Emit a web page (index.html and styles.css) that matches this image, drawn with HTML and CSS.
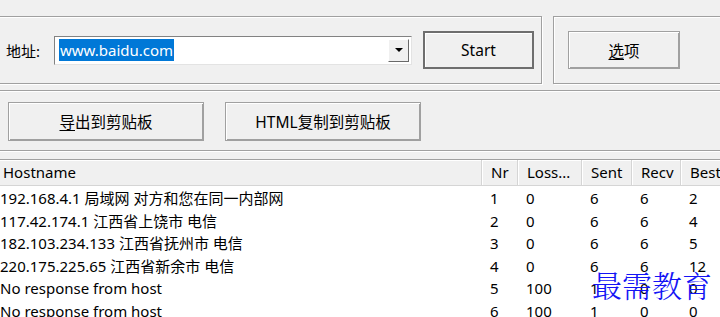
FILE: index.html
```html
<!DOCTYPE html>
<html lang="zh-CN">
<head>
    <meta charset="UTF-8">
    <title>Trace Route</title>
    <link rel="stylesheet" href="styles.css">
</head>
<body>
    <div class="window">
        <div class="top">
            <div class="group group-address">
                <span class="label">地址:</span>
                <div class="combo">
                    <div class="combo-text"><span class="selected">www.baidu.com</span></div>
                    <div class="combo-arrow"><span class="triangle"></span></div>
                </div>
                <button class="btn btn-default">Start</button>
            </div>
            <div class="group group-options">
                <button class="btn btn-options"><u>选</u>项</button>
            </div>
        </div>

        <div class="actions">
            <button class="btn btn-wide"><u>导</u>出到剪贴板</button>
            <button class="btn btn-wide">HTML复制到剪贴板</button>
        </div>

        <div class="list">
            <div class="list-header">
                <div class="col col-host">Hostname</div>
                <div class="col">Nr</div>
                <div class="col">Loss...</div>
                <div class="col">Sent</div>
                <div class="col">Recv</div>
                <div class="col">Best</div>
            </div>
            <div class="list-body" id="rows"></div>
        </div>

        <div class="watermark">最需教育</div>
    </div>

    <script>
        // Trace results
        const hops = [
            ['192.168.4.1 局域网 对方和您在同一内部网', 1, 0, 6, 6, 2],
            ['117.42.174.1 江西省上饶市 电信', 2, 0, 6, 6, 4],
            ['182.103.234.133 江西省抚州市 电信', 3, 0, 6, 6, 5],
            ['220.175.225.65 江西省新余市 电信', 4, 0, 6, 6, 12],
            ['No response from host', 5, 100, 1, 0, 0],
            ['No response from host', 6, 100, 1, 0, 0]
        ];

        const rows = document.getElementById('rows');
        hops.forEach((hop) => {
            const row = document.createElement('div');
            row.className = 'row';
            hop.forEach((value, index) => {
                const cell = document.createElement('div');
                cell.className = index === 0 ? 'cell cell-host' : 'cell';
                cell.innerText = value;
                row.appendChild(cell);
            });
            rows.appendChild(row);
        });
    </script>
</body>
</html>
```

FILE: styles.css
```css
/* Basic reset */
* {
    margin: 0;
    padding: 0;
    box-sizing: border-box;
}

body {
    background-color: #f0f0f0;
    font-family: 'Noto Sans', 'Noto Sans CJK SC', sans-serif;
    font-size: 15px;
    color: #000;
    overflow: hidden;
}

.window {
    position: relative;
    width: 720px;
    height: 317px;
    overflow: hidden;
}

/* Top row with the two group boxes */
.top {
    display: flex;
    height: 90px;
    padding-top: 16px;
}

.group {
    height: 68px;
    border: 1px solid #a0a0a0;
    box-shadow: inset 1px 1px #fff, 1px 1px #fff;
    display: flex;
    align-items: center;
}

.group-address {
    width: 546px;
    margin-left: -4px;
    padding-left: 9px;
}

.group-options {
    flex: 1;
    margin-left: 11px;
    margin-right: -10px;
    padding-left: 14px;
}

.label {
    width: 48px;
    font-size: 15px;
}

/* Address combo box */
.combo {
    display: flex;
    width: 358px;
    height: 29px;
    background-color: #fff;
    border: 1px solid #828282;
    border-right-color: #e3e3e3;
    border-bottom-color: #e3e3e3;
    padding: 2px;
}

.combo-text {
    flex: 1;
    display: flex;
    align-items: center;
    padding-left: 2px;
}

.combo-text .selected {
    background-color: #0078d7;
    color: #fff;
    line-height: 22px;
    padding: 0 1px;
    font-size: 15px;
}

.combo-arrow {
    width: 21px;
    background-color: #f0f0f0;
    border: 1px solid #fff;
    border-right-color: #696969;
    border-bottom-color: #696969;
    display: flex;
    align-items: center;
    justify-content: center;
}

.triangle {
    width: 0;
    height: 0;
    border-left: 4px solid transparent;
    border-right: 4px solid transparent;
    border-top: 4px solid #000;
}

/* Buttons */
.btn {
    font-family: 'Noto Sans', 'Noto Sans CJK SC', sans-serif;
    font-size: 15.5px;
    color: #000;
    background-color: #f0f0f0;
    border: 1px solid #a0a0a0;
    box-shadow: inset 1px 1px #fff, inset -1px -1px #a0a0a0;
}

.btn u {
    text-underline-offset: 2px;
}

.btn-default {
    width: 111px;
    height: 38px;
    margin-left: 11px;
    border: 2px solid #6e6e6e;
    box-shadow: inset 1px 1px #fff;
}

.btn-options {
    width: 112px;
    height: 38px;
}

/* Export buttons row */
.actions {
    height: 61px;
    margin: 0 -6px;
    border: 1px solid #a0a0a0;
    box-shadow: inset 1px 1px #fff, 1px 1px #fff;
    display: flex;
    align-items: center;
    gap: 21px;
    padding-left: 13px;
    padding-top: 2px;
}

.btn-wide {
    width: 196px;
    height: 39px;
}

/* Result list */
.list {
    margin-top: 8px;
    border-top: 1px solid #a0a0a0;
    background-color: #fff;
    height: 200px;
}

.list-header,
.row {
    display: grid;
    grid-template-columns: 481px 36px 64px 50px 49px 1fr;
}

.list-header {
    height: 26px;
    background-color: #f0f0f0;
    border-bottom: 1px solid #d5d5d5;
    box-shadow: inset 0 1px #fff;
}

.col {
    padding-left: 9px;
    line-height: 25px;
    border-left: 1px solid #d5d5d5;
    box-shadow: inset 1px 0 #fff;
    white-space: nowrap;
}

.col-host {
    border-left: none;
    box-shadow: none;
    padding-left: 3px;
}

.list-body {
    padding-top: 1px;
}

.row {
    height: 22.6px;
    line-height: 22px;
}

.cell {
    padding-left: 9px;
    white-space: nowrap;
    font-size: 15px;
}

.cell-host {
    padding-left: 0;
}

/* Watermark in the corner */
.watermark {
    position: absolute;
    left: 592px;
    top: 266px;
    font-size: 30px;
    line-height: 36px;
    color: #1414f5;
    font-weight: 300;
    font-family: 'Noto Serif CJK SC', 'Noto Sans CJK SC', serif;
}
```
